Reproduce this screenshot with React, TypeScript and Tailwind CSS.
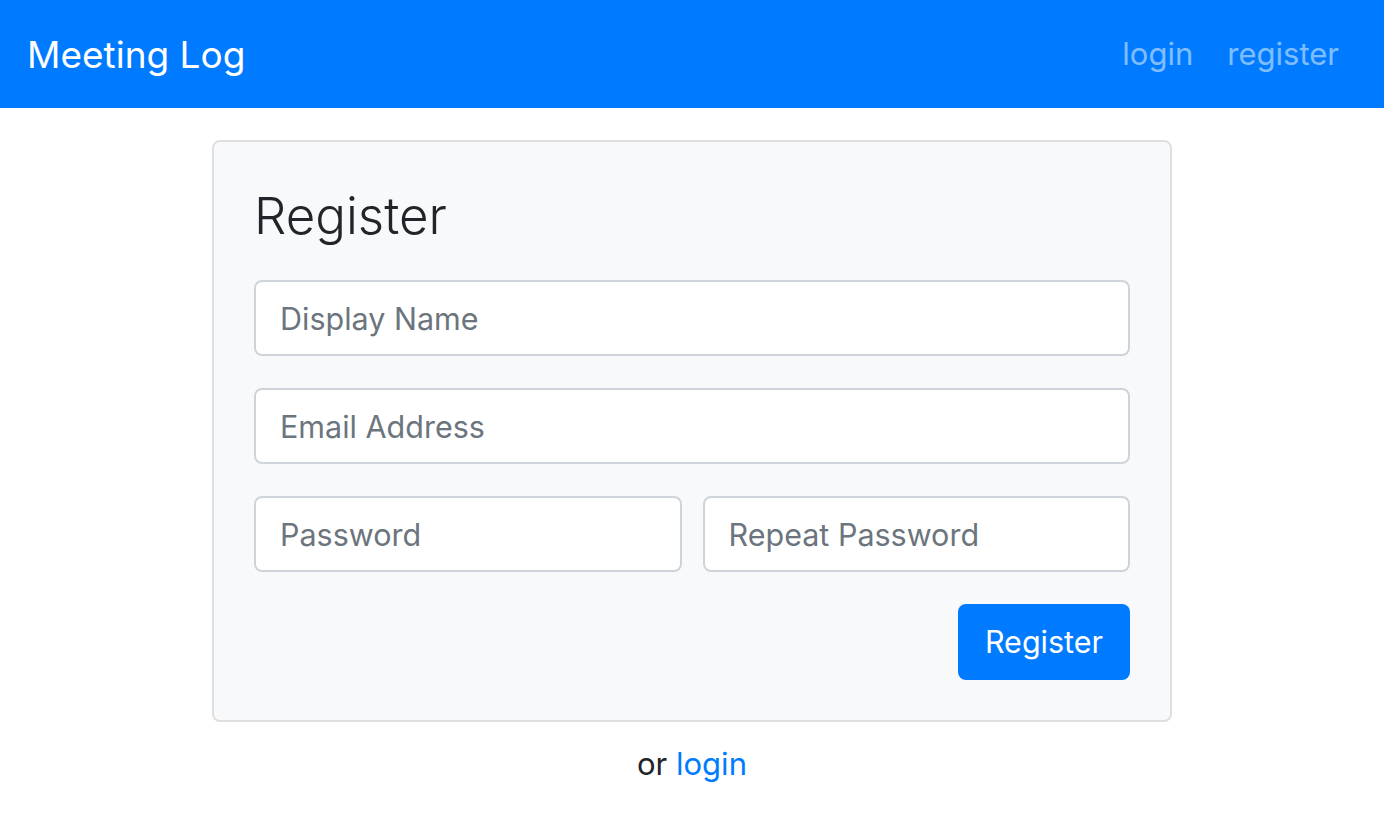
const inputClass =
  "w-full h-[76px] px-[24px] rounded-[8px] border-2 border-[#ced4da] bg-white text-[30.5px] text-[#495057] placeholder:text-[#6c757d] outline-none";

const App = () => {
  return (
    <div className="min-h-screen bg-white font-['Inter',sans-serif] text-[#212529]">
      <nav className="h-[108px] bg-[#007bff] flex items-center justify-between pl-[27px] pr-[45px]">
        <a className="text-[37px] text-white leading-none">Meeting Log</a>
        <div className="flex items-center gap-[34px] text-[31px] text-white/50">
          <a>login</a>
          <a>register</a>
        </div>
      </nav>

      <div className="w-[960px] mx-auto mt-[32px]">
        <div className="border-2 border-[#dfdfdf] rounded-[8px] bg-[#f8f9fa] p-[40px]">
          <h3 className="text-[51px] font-light leading-[67px] mb-[31px]">Register</h3>
          <form className="flex flex-col gap-[32px]">
            <input className={inputClass} placeholder="Display Name" />
            <input className={inputClass} placeholder="Email Address" />
            <div className="grid grid-cols-2 gap-[21px]">
              <input className={inputClass} type="password" placeholder="Password" />
              <input className={inputClass} type="password" placeholder="Repeat Password" />
            </div>
            <div className="flex justify-end">
              <button
                type="button"
                className="h-[76px] w-[172px] rounded-[8px] bg-[#007bff] text-white text-[30.5px]"
              >
                Register
              </button>
            </div>
          </form>
        </div>
        <p className="mt-[18px] text-center text-[31px] leading-[48px]">
          or <a className="text-[#007bff]">login</a>
        </p>
      </div>
    </div>
  );
};

export default App;
